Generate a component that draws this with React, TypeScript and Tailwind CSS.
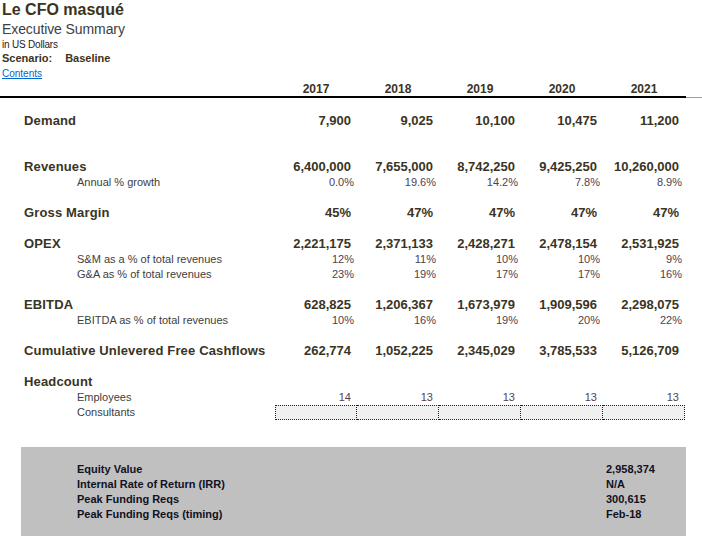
const years = ["2017", "2018", "2019", "2020", "2021"];

type Row = {
  label: string;
  values: string[];
  sub?: boolean;
};

const groups: Row[][] = [
  [{ label: "Demand", values: ["7,900", "9,025", "10,100", "10,475", "11,200"] }],
  [
    { label: "Revenues", values: ["6,400,000", "7,655,000", "8,742,250", "9,425,250", "10,260,000"] },
    { label: "Annual % growth", values: ["0.0%", "19.6%", "14.2%", "7.8%", "8.9%"], sub: true },
  ],
  [{ label: "Gross Margin", values: ["45%", "47%", "47%", "47%", "47%"] }],
  [
    { label: "OPEX", values: ["2,221,175", "2,371,133", "2,428,271", "2,478,154", "2,531,925"] },
    { label: "S&M as a % of total revenues", values: ["12%", "11%", "10%", "10%", "9%"], sub: true },
    { label: "G&A as % of total revenues", values: ["23%", "19%", "17%", "17%", "16%"], sub: true },
  ],
  [
    { label: "EBITDA", values: ["628,825", "1,206,367", "1,673,979", "1,909,596", "2,298,075"] },
    { label: "EBITDA as % of total revenues", values: ["10%", "16%", "19%", "20%", "22%"], sub: true },
  ],
  [{ label: "Cumulative Unlevered Free Cashflows", values: ["262,774", "1,052,225", "2,345,029", "3,785,533", "5,126,709"] }],
];

const groupGaps = ["mt-[15px]", "mt-[30px]", "mt-[15px]", "mt-[15px]", "mt-[15px]", "mt-[15px]"];

const summary = [
  ["Equity Value", "2,958,374"],
  ["Internal Rate of Return (IRR)", "N/A"],
  ["Peak Funding Reqs", "300,615"],
  ["Peak Funding Reqs (timing)", "Feb-18"],
];

function DataRow({ row }: { row: Row }) {
  if (row.sub) {
    return (
      <div className="grid grid-cols-[275px_repeat(5,82px)] h-[15px] leading-[15px] text-[11px]">
        <div className="pl-[77px] text-[#404040] whitespace-nowrap">{row.label}</div>
        {row.values.map((v, i) => (
          <div key={i} className="text-right pr-[3px] text-[#4d4250]">
            {v}
          </div>
        ))}
      </div>
    );
  }
  return (
    <div className="grid grid-cols-[275px_repeat(5,82px)] h-[16px] leading-[16px] text-[13px] font-bold text-[#3a3424]">
      <div className="pl-[24px] whitespace-nowrap tracking-[0.15px]">{row.label}</div>
      {row.values.map((v, i) => (
        <div key={i} className="text-right pr-[6px]">
          {v}
        </div>
      ))}
    </div>
  );
}

export default function App() {
  return (
    <div className="w-[702px] h-[547px] bg-white overflow-hidden font-['Liberation_Sans',Arial,sans-serif]">
      {/* title block */}
      <div className="pl-[2px]">
        <div className="h-[20px] leading-[20px] text-[16px] font-bold text-[#3b3320]">Le CFO masqué</div>
        <div className="h-[18px] leading-[18px] text-[14px] text-[#3c3f44] tracking-[-0.1px]">Executive Summary</div>
        <div className="h-[13px] leading-[13px] text-[10px] text-[#222] tracking-[-0.2px]">in US Dollars</div>
        <div className="h-[14px] leading-[14px] text-[11px] font-bold text-[#3b3320]">
          Scenario:<span className="ml-[13px]">Baseline</span>
        </div>
        <div className="h-[17px] leading-[17px] text-[10px]">
          <a href="#" className="text-[#0066cc] underline">
            Contents
          </a>
        </div>
      </div>

      {/* year header */}
      <div className="flex items-end">
        <div className="grid grid-cols-[275px_repeat(5,82px)] w-[686px] h-[16px] leading-[14px] border-b-2 border-black text-[12px] font-bold text-[#3a3424]">
          <div />
          {years.map((y) => (
            <div key={y} className="text-center">
              {y}
            </div>
          ))}
        </div>
        <div className="flex-1 border-b border-[#a0a0a0]" />
      </div>

      {groups.map((g, gi) => (
        <div key={gi} className={groupGaps[gi]}>
          {g.map((r) => (
            <DataRow key={r.label} row={r} />
          ))}
        </div>
      ))}

      {/* headcount */}
      <div className="mt-[15px]">
        <div className="h-[16px] leading-[16px] text-[13px] font-bold text-[#3a3424] pl-[24px] tracking-[0.15px]">
          Headcount
        </div>
        <div className="grid grid-cols-[275px_repeat(5,82px)] h-[15px] leading-[15px] text-[11px]">
          <div className="pl-[77px] text-[#404040]">Employees</div>
          {["14", "13", "13", "13", "13"].map((v, i) => (
            <div key={i} className="text-right pr-[6px] text-[#5a4048]">
              {v}
            </div>
          ))}
        </div>
        <div className="grid grid-cols-[275px_repeat(5,82px)] h-[15px] leading-[13px] text-[11px]">
          <div className="pl-[77px] text-[#404040] leading-[15px]">Consultants</div>
          {[0, 1, 2, 3, 4].map((i) => (
            <div
              key={i}
              className={
                i === 0
                  ? "bg-[#f0f0f0] border border-dotted border-[#222]"
                  : "bg-[#f0f0f0] border border-l-0 border-dotted border-[#222]"
              }
            />
          ))}
        </div>
      </div>

      {/* summary box */}
      <div className="mt-[27px] ml-[21px] w-[665px] h-[89px] bg-[#c0c0c0] pt-[15px]">
        {summary.map(([k, v]) => (
          <div key={k} className="flex h-[15px] leading-[15px] text-[11px] font-bold text-[#111122]">
            <div className="pl-[56px] w-[585px] whitespace-nowrap">{k}</div>
            <div>{v}</div>
          </div>
        ))}
      </div>
    </div>
  );
}
